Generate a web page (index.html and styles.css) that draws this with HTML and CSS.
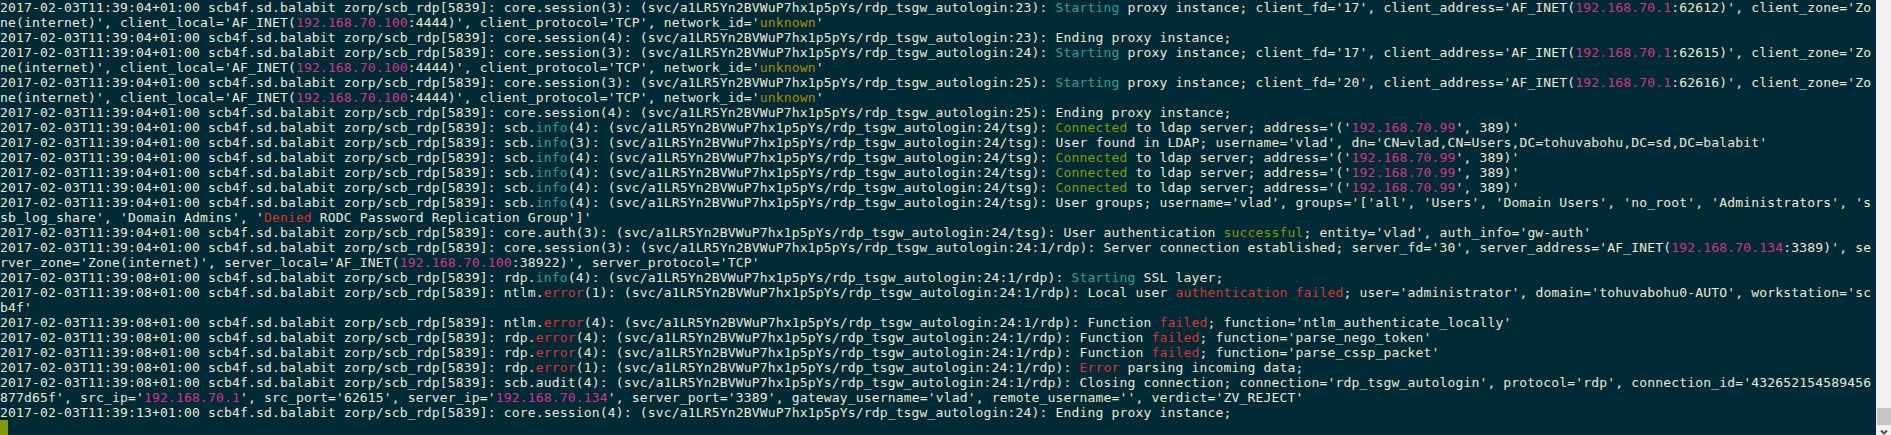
FILE: index.html
```html
<!DOCTYPE html>
<html lang="en">
<head>
<meta charset="utf-8">
<title>Terminal</title>
<link rel="stylesheet" href="styles.css">
</head>
<body>
<div class="window">
<pre class="term">2017-02-03T11:39:04+01:00 scb4f.sd.balabit zorp/scb_rdp[5839]: core.session(3): (svc/a1LR5Yn2BVWuP7hx1p5pYs/rdp_tsgw_autologin:23): <span class="c">Starting</span> proxy instance; client_fd='17', client_address='AF_INET(<span class="m">192.168.70.1</span>:62612)', client_zone='Zo
ne(internet)', client_local='AF_INET(<span class="m">192.168.70.100</span>:4444)', client_protocol='TCP', network_id='<span class="y">unknown</span>'
2017-02-03T11:39:04+01:00 scb4f.sd.balabit zorp/scb_rdp[5839]: core.session(4): (svc/a1LR5Yn2BVWuP7hx1p5pYs/rdp_tsgw_autologin:23): Ending proxy instance;
2017-02-03T11:39:04+01:00 scb4f.sd.balabit zorp/scb_rdp[5839]: core.session(3): (svc/a1LR5Yn2BVWuP7hx1p5pYs/rdp_tsgw_autologin:24): <span class="c">Starting</span> proxy instance; client_fd='17', client_address='AF_INET(<span class="m">192.168.70.1</span>:62615)', client_zone='Zo
ne(internet)', client_local='AF_INET(<span class="m">192.168.70.100</span>:4444)', client_protocol='TCP', network_id='<span class="y">unknown</span>'
2017-02-03T11:39:04+01:00 scb4f.sd.balabit zorp/scb_rdp[5839]: core.session(3): (svc/a1LR5Yn2BVWuP7hx1p5pYs/rdp_tsgw_autologin:25): <span class="c">Starting</span> proxy instance; client_fd='20', client_address='AF_INET(<span class="m">192.168.70.1</span>:62616)', client_zone='Zo
ne(internet)', client_local='AF_INET(<span class="m">192.168.70.100</span>:4444)', client_protocol='TCP', network_id='<span class="y">unknown</span>'
2017-02-03T11:39:04+01:00 scb4f.sd.balabit zorp/scb_rdp[5839]: core.session(4): (svc/a1LR5Yn2BVWuP7hx1p5pYs/rdp_tsgw_autologin:25): Ending proxy instance;
2017-02-03T11:39:04+01:00 scb4f.sd.balabit zorp/scb_rdp[5839]: scb.<span class="c">info</span>(4): (svc/a1LR5Yn2BVWuP7hx1p5pYs/rdp_tsgw_autologin:24/tsg): <span class="g">Connected</span> to ldap server; address='('<span class="m">192.168.70.99</span>', 389)'
2017-02-03T11:39:04+01:00 scb4f.sd.balabit zorp/scb_rdp[5839]: scb.<span class="c">info</span>(3): (svc/a1LR5Yn2BVWuP7hx1p5pYs/rdp_tsgw_autologin:24/tsg): User found in LDAP; username='vlad', dn='CN=vlad,CN=Users,DC=tohuvabohu,DC=sd,DC=balabit'
2017-02-03T11:39:04+01:00 scb4f.sd.balabit zorp/scb_rdp[5839]: scb.<span class="c">info</span>(4): (svc/a1LR5Yn2BVWuP7hx1p5pYs/rdp_tsgw_autologin:24/tsg): <span class="g">Connected</span> to ldap server; address='('<span class="m">192.168.70.99</span>', 389)'
2017-02-03T11:39:04+01:00 scb4f.sd.balabit zorp/scb_rdp[5839]: scb.<span class="c">info</span>(4): (svc/a1LR5Yn2BVWuP7hx1p5pYs/rdp_tsgw_autologin:24/tsg): <span class="g">Connected</span> to ldap server; address='('<span class="m">192.168.70.99</span>', 389)'
2017-02-03T11:39:04+01:00 scb4f.sd.balabit zorp/scb_rdp[5839]: scb.<span class="c">info</span>(4): (svc/a1LR5Yn2BVWuP7hx1p5pYs/rdp_tsgw_autologin:24/tsg): <span class="g">Connected</span> to ldap server; address='('<span class="m">192.168.70.99</span>', 389)'
2017-02-03T11:39:04+01:00 scb4f.sd.balabit zorp/scb_rdp[5839]: scb.<span class="c">info</span>(4): (svc/a1LR5Yn2BVWuP7hx1p5pYs/rdp_tsgw_autologin:24/tsg): User groups; username='vlad', groups='['all', 'Users', 'Domain Users', 'no_root', 'Administrators', 's
sb_log_share', 'Domain Admins', '<span class="r">Denied</span> RODC Password Replication Group']'
2017-02-03T11:39:04+01:00 scb4f.sd.balabit zorp/scb_rdp[5839]: core.auth(3): (svc/a1LR5Yn2BVWuP7hx1p5pYs/rdp_tsgw_autologin:24/tsg): User authentication <span class="g">successful</span>; entity='vlad', auth_info='gw-auth'
2017-02-03T11:39:04+01:00 scb4f.sd.balabit zorp/scb_rdp[5839]: core.session(3): (svc/a1LR5Yn2BVWuP7hx1p5pYs/rdp_tsgw_autologin:24:1/rdp): Server connection established; server_fd='30', server_address='AF_INET(<span class="m">192.168.70.134</span>:3389)', se
rver_zone='Zone(internet)', server_local='AF_INET(<span class="m">192.168.70.100</span>:38922)', server_protocol='TCP'
2017-02-03T11:39:08+01:00 scb4f.sd.balabit zorp/scb_rdp[5839]: rdp.<span class="c">info</span>(4): (svc/a1LR5Yn2BVWuP7hx1p5pYs/rdp_tsgw_autologin:24:1/rdp): <span class="c">Starting</span> SSL layer;
2017-02-03T11:39:08+01:00 scb4f.sd.balabit zorp/scb_rdp[5839]: ntlm.<span class="r">error</span>(1): (svc/a1LR5Yn2BVWuP7hx1p5pYs/rdp_tsgw_autologin:24:1/rdp): Local user <span class="r">authentication failed</span>; user='administrator', domain='tohuvabohu0-AUTO', workstation='sc
b4f'
2017-02-03T11:39:08+01:00 scb4f.sd.balabit zorp/scb_rdp[5839]: ntlm.<span class="r">error</span>(4): (svc/a1LR5Yn2BVWuP7hx1p5pYs/rdp_tsgw_autologin:24:1/rdp): Function <span class="r">failed</span>; function='ntlm_authenticate_locally'
2017-02-03T11:39:08+01:00 scb4f.sd.balabit zorp/scb_rdp[5839]: rdp.<span class="r">error</span>(4): (svc/a1LR5Yn2BVWuP7hx1p5pYs/rdp_tsgw_autologin:24:1/rdp): Function <span class="r">failed</span>; function='parse_nego_token'
2017-02-03T11:39:08+01:00 scb4f.sd.balabit zorp/scb_rdp[5839]: rdp.<span class="r">error</span>(4): (svc/a1LR5Yn2BVWuP7hx1p5pYs/rdp_tsgw_autologin:24:1/rdp): Function <span class="r">failed</span>; function='parse_cssp_packet'
2017-02-03T11:39:08+01:00 scb4f.sd.balabit zorp/scb_rdp[5839]: rdp.<span class="r">error</span>(1): (svc/a1LR5Yn2BVWuP7hx1p5pYs/rdp_tsgw_autologin:24:1/rdp): <span class="r">Error</span> parsing incoming data;
2017-02-03T11:39:08+01:00 scb4f.sd.balabit zorp/scb_rdp[5839]: scb.audit(4): (svc/a1LR5Yn2BVWuP7hx1p5pYs/rdp_tsgw_autologin:24:1/rdp): Closing connection; connection='rdp_tsgw_autologin', protocol='rdp', connection_id='432652154589456
877d65f', src_ip='<span class="m">192.168.70.1</span>', src_port='62615', server_ip='<span class="m">192.168.70.134</span>', server_port='3389', gateway_username='vlad', remote_username='', verdict='ZV_REJECT'
2017-02-03T11:39:13+01:00 scb4f.sd.balabit zorp/scb_rdp[5839]: core.session(4): (svc/a1LR5Yn2BVWuP7hx1p5pYs/rdp_tsgw_autologin:24): Ending proxy instance;
<span class="cursor"> </span></pre>
<div class="scrollbar">
<div class="thumb"></div>
<svg class="arrow" width="15" height="10" viewBox="0 0 15 10"><path d="M5 5.5 8 8.5 11 5.5" fill="none" stroke="#505050" stroke-width="2"/></svg>
</div>
</div>
</body>
</html>
```

FILE: styles.css
```css
html, body {
  margin: 0;
  padding: 0;
  background: #002b36;
}
.window {
  display: flex;
  width: 1891px;
  height: 435px;
  overflow: hidden;
}
.term {
  flex: 1;
  margin: 0;
  padding: 0;
  background: #002b36;
  color: #eee8d5;
  font-family: "DejaVu Sans Mono", monospace;
  font-size: 13px;
  letter-spacing: 0.17px;
  line-height: 15px;
  white-space: pre;
  overflow: hidden;
}
.c { color: #2aa198; }
.m { color: #d33682; }
.g { color: #859900; }
.y { color: #b58900; }
.r { color: #dc322f; }
.cursor {
  display: inline-block;
  width: 8px;
  height: 15px;
  background: #859900;
  vertical-align: top;
}
.scrollbar {
  width: 15px;
  background: #f1f1f1;
  display: flex;
  flex-direction: column;
  justify-content: flex-end;
}
.thumb {
  height: 17px;
  margin-left: 1px;
  background: #c6c6c6;
}
.arrow {
  display: block;
}
```
